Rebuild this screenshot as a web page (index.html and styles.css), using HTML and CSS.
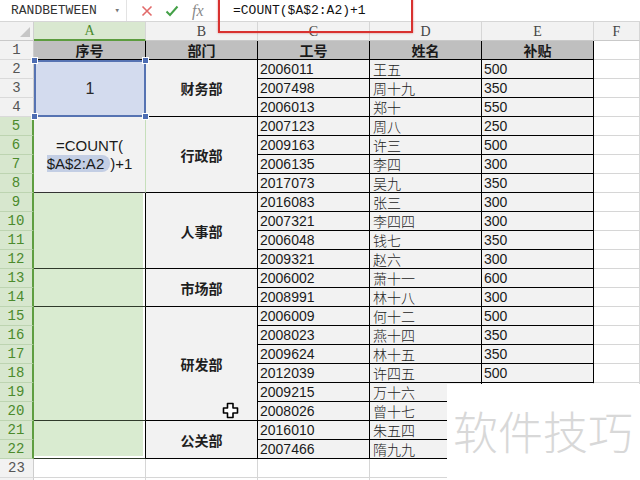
FILE: index.html
```html
<!DOCTYPE html>
<html lang="zh-CN">
<head>
<meta charset="utf-8">
<title>COUNT 序号</title>
<link rel="stylesheet" href="styles.css">
</head>
<body>
<div class="app">
  <div class="fbar">
    <div class="namebox"><span>RANDBETWEEN</span><span class="nb-arrow">▾</span></div>
    <div class="fb-icons">
      <svg class="ico" width="12" height="12" viewBox="0 0 12 12"><path d="M1.5 1.5 L10.5 10.5 M10.5 1.5 L1.5 10.5" stroke="#e26a6a" stroke-width="1.6" fill="none"/></svg>
      <svg class="ico" width="14" height="12" viewBox="0 0 14 12"><path d="M1.5 6.5 L5 10 L12.5 1.5" stroke="#43a047" stroke-width="2" fill="none"/></svg>
      <span class="fx">fx</span>
    </div>
    <div class="formula">=COUNT($A$2:A2)+1</div>
  </div>
  <div class="redbox"></div>

  <div class="sheet">
    <div class="corner"><span class="tri"></span></div>
    <div class="ch chsel">A</div><div class="ch">B</div><div class="ch">C</div><div class="ch">D</div><div class="ch">E</div><div class="ch">F</div>

    <div class="rh">1</div><div class="c hd">序号</div><div class="c hd">部门</div><div class="c hd">工号</div><div class="c hd">姓名</div><div class="c hd">补贴</div><div class="c"></div>

    <div class="rh">2</div>
    <div class="c selblue s3">1<i class="h tl"></i><i class="h tr"></i><i class="h bl"></i><i class="h br"></i></div>
    <div class="c t dept s3">财务部</div>
    <div class="c t">2006011</div><div class="c t nm">王五</div><div class="c t">500</div><div class="c"></div>
    <div class="rh">3</div><div class="c t">2007498</div><div class="c t nm">周十九</div><div class="c t">350</div><div class="c"></div>
    <div class="rh">4</div><div class="c t">2006013</div><div class="c t nm">郑十</div><div class="c t">550</div><div class="c"></div>

    <div class="rh g">5</div>
    <div class="c edit s4"><span>=COUNT(</span><span><span class="ref">$A$2:A2</span>)+1</span></div>
    <div class="c t dept s4">行政部</div>
    <div class="c t">2007123</div><div class="c t nm">周八</div><div class="c t">250</div><div class="c"></div>
    <div class="rh g">6</div><div class="c t">2009163</div><div class="c t nm">许三</div><div class="c t">500</div><div class="c"></div>
    <div class="rh g">7</div><div class="c t">2006135</div><div class="c t nm">李四</div><div class="c t">300</div><div class="c"></div>
    <div class="rh g">8</div><div class="c t">2017073</div><div class="c t nm">吴九</div><div class="c t">350</div><div class="c"></div>

    <div class="rh g">9</div>
    <div class="c ga s4"></div>
    <div class="c t dept s4">人事部</div>
    <div class="c t">2016083</div><div class="c t nm">张三</div><div class="c t">300</div><div class="c"></div>
    <div class="rh g">10</div><div class="c t">2007321</div><div class="c t nm">李四四</div><div class="c t">300</div><div class="c"></div>
    <div class="rh g">11</div><div class="c t">2006048</div><div class="c t nm">钱七</div><div class="c t">350</div><div class="c"></div>
    <div class="rh g">12</div><div class="c t">2009321</div><div class="c t nm">赵六</div><div class="c t">300</div><div class="c"></div>

    <div class="rh g">13</div>
    <div class="c ga s2"></div>
    <div class="c t dept s2">市场部</div>
    <div class="c t">2006002</div><div class="c t nm">萧十一</div><div class="c t">600</div><div class="c"></div>
    <div class="rh g">14</div><div class="c t">2008991</div><div class="c t nm">林十八</div><div class="c t">300</div><div class="c"></div>

    <div class="rh g">15</div>
    <div class="c ga s6"></div>
    <div class="c t dept s6">研发部</div>
    <div class="c t">2006009</div><div class="c t nm">何十二</div><div class="c t">500</div><div class="c"></div>
    <div class="rh g">16</div><div class="c t">2008023</div><div class="c t nm">燕十四</div><div class="c t">350</div><div class="c"></div>
    <div class="rh g">17</div><div class="c t">2009624</div><div class="c t nm">林十五</div><div class="c t">350</div><div class="c"></div>
    <div class="rh g">18</div><div class="c t">2012039</div><div class="c t nm">许四五</div><div class="c t">500</div><div class="c"></div>
    <div class="rh g">19</div><div class="c t">2009215</div><div class="c t nm">万十六</div><div class="c"></div><div class="c"></div>
    <div class="rh g">20</div><div class="c t">2008026</div><div class="c t nm">曾十七</div><div class="c"></div><div class="c"></div>

    <div class="rh g">21</div>
    <div class="c ga gend s2"></div>
    <div class="c t dept s2">公关部</div>
    <div class="c t">2016010</div><div class="c t nm">朱五四</div><div class="c"></div><div class="c"></div>
    <div class="rh g">22</div><div class="c t">2007466</div><div class="c t nm">隋九九</div><div class="c"></div><div class="c"></div>

    <div class="rh">23</div><div class="c"></div><div class="c"></div><div class="c"></div><div class="c"></div><div class="c"></div><div class="c"></div>
    <div class="rh"></div><div class="c"></div><div class="c"></div><div class="c"></div><div class="c"></div><div class="c"></div><div class="c"></div>
  </div>

  <div class="watermark">软件技巧</div>
  <svg class="cursor" width="17" height="17" viewBox="0 0 17 17"><path d="M5.5 1.5 H11 V6 H15.5 V11 H11 V15.5 H5.5 V11 H1.5 V6 H5.5 Z" fill="#fff" stroke="#000" stroke-width="1.6" stroke-linejoin="round"/></svg>
</div>
</body>
</html>
```

FILE: styles.css
```css
html, body {
  margin: 0;
  padding: 0;
  background: #fff;
}
body {
  width: 640px;
  height: 480px;
  overflow: hidden;
  font-family: "Liberation Sans", "Noto Sans CJK SC", sans-serif;
  color: #1a1a1a;
}
.app {
  position: relative;
  width: 640px;
  height: 480px;
  overflow: hidden;
}

/* formula bar */
.fbar {
  display: flex;
  height: 22px;
  box-sizing: border-box;
  border-bottom: 1px solid #d6d6d6;
  background: #fff;
}
.namebox {
  width: 127px;
  box-sizing: border-box;
  display: flex;
  align-items: center;
  justify-content: space-between;
  padding: 0 6px 0 11px;
  font-family: "Liberation Mono", monospace;
  font-size: 13px;
  color: #333;
  border-right: 1px solid #e3e3e3;
}
.nb-arrow {
  font-size: 9px;
  color: #777;
}
.fb-icons {
  width: 91px;
  display: flex;
  align-items: center;
  padding-left: 14px;
  gap: 12px;
  box-sizing: border-box;
}
.fx {
  font-family: "Liberation Serif", serif;
  font-style: italic;
  font-size: 16px;
  color: #8a8a8a;
  margin-left: 1px;
}
.formula {
  flex: 1;
  padding-left: 15px;
  font-family: "Liberation Mono", monospace;
  font-size: 13px;
  line-height: 22px;
  color: #111;
}
.redbox {
  position: absolute;
  left: 218px;
  top: -6px;
  width: 195px;
  height: 39px;
  box-sizing: border-box;
  border: 2px solid #d8312f;
  box-shadow: 0 0 2px rgba(200, 40, 40, 0.55);
  z-index: 3;
}

/* sheet grid */
.sheet {
  display: grid;
  grid-template-columns: 34px repeat(5, 112px) 1fr;
  grid-auto-rows: 19px;
  height: 458px;
  overflow: hidden;
}
.corner {
  background: #f2f2f2;
  border-right: 1px solid #d0d0d0;
  border-bottom: 1px solid #c9c9c9;
  box-sizing: border-box;
  position: relative;
}
.tri {
  position: absolute;
  right: 3px;
  bottom: 3px;
  width: 0;
  height: 0;
  border-left: 10px solid transparent;
  border-bottom: 10px solid #c6c6c6;
}
.ch {
  background: #f2f2f2;
  border-right: 1px solid #d6d6d6;
  border-bottom: 1px solid #c9c9c9;
  box-sizing: border-box;
  text-align: center;
  font-family: "Liberation Serif", serif;
  font-size: 14px;
  line-height: 19px;
  color: #444;
}
.chsel {
  background: #d9e8d0;
  color: #4a8a2e;
  border-bottom: 2px solid #5c9c3e;
  line-height: 18px;
}
.rh {
  background: #f2f2f2;
  border-right: 1px solid #cdcdcd;
  border-bottom: 1px solid #dadada;
  box-sizing: border-box;
  text-align: center;
  font-family: "Liberation Mono", monospace;
  font-size: 14px;
  line-height: 19px;
  color: #555;
}
.rh.g {
  background: #d7e7ce;
  color: #4b8a2c;
  border-right: 2px solid #5f9e41;
  border-bottom-color: #bdd4b1;
}
.c {
  box-sizing: border-box;
  border-right: 1px solid #d6d6d6;
  border-bottom: 1px solid #d6d6d6;
  font-size: 14px;
  line-height: 18px;
  padding-left: 2px;
  white-space: nowrap;
  overflow: hidden;
}
.t {
  background: #f2f2f2;
  border-color: #000;
}
.nm {
  font-family: "Noto Sans CJK SC", sans-serif;
  font-weight: 300;
  color: #222;
  font-size: 14px;
  line-height: 18px;
  padding-left: 3px;
}
.hd {
  background: #bfbfbf;
  border-color: #000;
  text-align: center;
  padding-left: 0;
  font-family: "Noto Sans CJK SC", sans-serif;
  font-weight: 700;
  font-size: 14px;
  line-height: 18px;
  color: #1a1a1a;
}
.dept {
  display: flex;
  align-items: center;
  justify-content: center;
  padding-left: 0;
  font-family: "Noto Sans CJK SC", sans-serif;
  font-weight: 700;
  color: #1e1e1e;
}
.s2 { grid-row: span 2; }
.s3 { grid-row: span 3; }
.s4 { grid-row: span 4; }
.s6 { grid-row: span 6; }

.selblue {
  position: relative;
  overflow: visible;
  background: #d3dbee;
  border: 2px solid #5673b2;
  display: flex;
  align-items: center;
  justify-content: center;
  padding-left: 0;
  font-size: 16px;
  color: #2a2a2a;
}
.h {
  position: absolute;
  width: 5px;
  height: 5px;
  background: #4d6db3;
  border: 1px solid #fff;
  box-sizing: content-box;
}
.tl { left: -5px; top: -5px; }
.tr { right: -5px; top: -5px; }
.bl { left: -5px; bottom: -5px; }
.br { right: -5px; bottom: -5px; }

.edit {
  background: #f2f2f2;
  border-right: 1px solid #c6dfbb;
  border-bottom: 1px solid #333;
  display: flex;
  flex-direction: column;
  justify-content: center;
  align-items: center;
  padding-left: 0;
  font-size: 15px;
  line-height: 18px;
  color: #1a1a1a;
}
.ref {
  background: #c3cee4;
  border-radius: 0 8px 8px 0;
  padding-right: 6px;
}
.ga {
  background: #d9ebd0;
  border-right: 1px solid #000;
  border-bottom: 1px solid #2f3a2a;
  box-shadow: inset -2px 0 0 #fff;
}
.gend {
  box-shadow: inset -2px 0 0 #fff, inset 0 -2px 0 #fff;
}

/* overlays */
.watermark {
  position: absolute;
  left: 447px;
  top: 384px;
  width: 193px;
  height: 96px;
  background: #fff;
  box-sizing: border-box;
  padding: 22px 0 0 6px;
  font-family: "Noto Sans CJK SC", sans-serif;
  font-weight: 300;
  font-size: 45px;
  line-height: 50px;
  color: #d8d8d8;
  white-space: nowrap;
}
.cursor {
  position: absolute;
  left: 222px;
  top: 402px;
}
```
